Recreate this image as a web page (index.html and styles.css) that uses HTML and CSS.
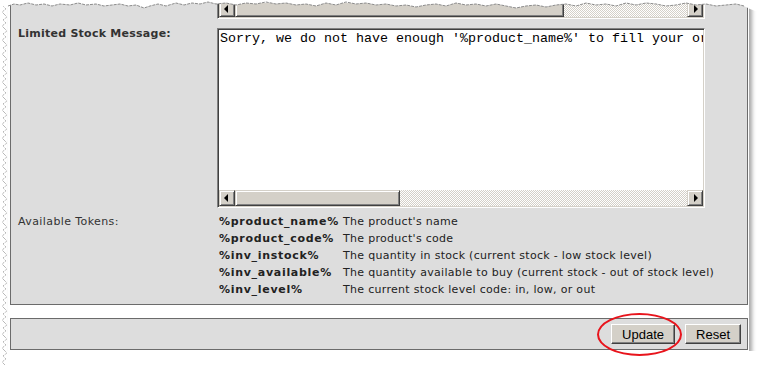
FILE: index.html
```html
<!DOCTYPE html>
<html lang="en">
<head>
    <meta charset="UTF-8">
    <title>Inventory Settings</title>
    <link rel="stylesheet" href="styles.css">
</head>
<body>
    <div class="frame">
        <div class="panel">
            <div class="label"></div>
            <div class="field">
                <div class="textbox tail">
                    <div class="hscroll">
                        <span class="sb-btn left"></span>
                        <span class="sb-thumb long"></span>
                        <span class="sb-track"></span>
                        <span class="sb-btn right"></span>
                    </div>
                </div>
            </div>

            <div class="label strong">Limited Stock Message:</div>
            <div class="field message">
                <div class="textbox">
                    <div class="text">Sorry, we do not have enough '%product_name%' to fill your order. We have %inv_available% available.</div>
                    <div class="hscroll">
                        <span class="sb-btn left"></span>
                        <span class="sb-thumb short"></span>
                        <span class="sb-track"></span>
                        <span class="sb-btn right"></span>
                    </div>
                </div>
            </div>

            <div class="label plain">Available Tokens:</div>
            <div class="field list">
                <div class="tokens">
                    <b>%product_name%</b><span>The product's name</span>
                    <b>%product_code%</b><span>The product's code</span>
                    <b>%inv_instock%</b><span>The quantity in stock (current stock - low stock level)</span>
                    <b>%inv_available%</b><span>The quantity available to buy (current stock - out of stock level)</span>
                    <b>%inv_level%</b><span>The current stock level code: in, low, or out</span>
                </div>
            </div>
        </div>

        <div class="actions">
            <button class="btn">Update</button>
            <button class="btn">Reset</button>
        </div>
    </div>

    <!-- screenshot decorations -->
    <span class="highlight"></span>
    <svg class="torn-top" width="758" height="12" viewBox="0 0 758 12">
        <polygon fill="#fff" points="0,0 0,6 8,6 14,4 20,5 28,3 36,5 44,4 52,6 60,4 70,5 78,3 86,5 96,4 104,6 112,5 120,4 128,6 136,5 144,8 150,6 158,4 166,6 176,3 184,5 192,3 200,4 208,2 216,4 226,3 236,5 246,3 256,4 266,2 276,4 286,3 296,5 306,4 316,6 326,3 336,5 346,2 356,4 366,3 376,5 386,4 396,6 406,5 416,7 426,5 436,4 446,6 456,3 466,5 476,4 486,6 496,4 506,6 516,8 526,6 536,5 546,7 556,5 566,4 576,6 586,3 596,5 606,4 616,6 626,3 636,5 646,3 656,4 666,6 676,5 686,3 696,5 706,4 716,6 726,5 736,4 744,6 750,9 758,12 758,0"/>
        <polyline fill="none" stroke="#8c8c8c" stroke-width="1" stroke-dasharray="3 1" points="8,6 14,4 20,5 28,3 36,5 44,4 52,6 60,4 70,5 78,3 86,5 96,4 104,6 112,5 120,4 128,6 136,5 144,8 150,6 158,4 166,6 176,3 184,5 192,3 200,4 208,2 216,4 226,3 236,5 246,3 256,4 266,2 276,4 286,3 296,5 306,4 316,6 326,3 336,5 346,2 356,4 366,3 376,5 386,4 396,6 406,5 416,7 426,5 436,4 446,6 456,3 466,5 476,4 486,6 496,4 506,6 516,8 526,6 536,5 546,7 556,5 566,4 576,6 586,3 596,5 606,4 616,6 626,3 636,5 646,3 656,4 666,6 676,5 686,3 696,5 706,4 716,6 726,5 736,4 744,6"/>
    </svg>
    <svg class="torn-left" width="9" height="365">
        <defs>
            <pattern id="zig" width="9" height="14" patternUnits="userSpaceOnUse">
                <path d="M4 0 L7 3 L3 6 L6 9 L2 12 L4 14" fill="none" stroke="#9a9a9a" stroke-width="1" stroke-dasharray="1 1"/>
            </pattern>
        </defs>
        <rect x="0" y="6" width="9" height="359" fill="url(#zig)"/>
    </svg>
</body>
</html>
```

FILE: styles.css
```css
body {
    margin: 0;
    background-color: #fff;
    font-family: "DejaVu Sans", Verdana, sans-serif;
    font-size: 11px;
    color: #333;
}

.frame {
    width: 741px;
    margin-left: 8px;
    padding: 0 1px 1px 2px;
    box-sizing: border-box;
    background-color: #fff;
    box-shadow: 3px 3px 4px rgba(0, 0, 0, 0.35);
}

.panel {
    display: grid;
    grid-template-columns: 206px 1fr;
    align-items: start;
    background-color: #dddddd;
    border: 1px solid #6b6b6b;
    border-top: none;
    padding-bottom: 6px;
}

.label {
    padding-left: 7px;
    line-height: 17px;
    letter-spacing: 0.4px;
}

.label.strong {
    font-weight: bold;
    margin-top: 8px;
    line-height: 14px;
    letter-spacing: 0.25px;
}

.label.plain {
    margin-top: 5px;
}

.field {
    min-width: 0;
}

.field.message {
    margin-top: 9px;
}

.field.list {
    margin-top: 5px;
}

/* classic sunken textarea */
.textbox {
    width: 488px;
    height: 180px;
    box-sizing: border-box;
    border: 1px solid;
    border-color: #808080 #fff #fff #808080;
    box-shadow: inset 1px 1px #404040, inset -1px -1px #d4d0c8;
    background-color: #fff;
    padding: 1px;
    display: flex;
    flex-direction: column;
}

.textbox.tail {
    height: 19px;
    border-top: none;
    padding-top: 1px;
    box-shadow: inset 1px 0 #404040, inset -1px -1px #d4d0c8;
}

.text {
    flex: 1;
    overflow: hidden;
    white-space: pre;
    font-family: "Liberation Mono", "Courier New", monospace;
    font-size: 13.333px;
    line-height: 16px;
    color: #000;
    padding: 1px 0 0 1px;
}

.hscroll {
    display: flex;
    height: 16px;
    flex: none;
}

.sb-btn,
.sb-thumb {
    box-sizing: border-box;
    background-color: #d4d0c8;
    border: 1px solid;
    border-color: #d4d0c8 #404040 #404040 #d4d0c8;
    box-shadow: inset 1px 1px #fff, inset -1px -1px #808080;
}

.sb-btn {
    width: 16px;
    display: flex;
    align-items: center;
    justify-content: center;
}

.sb-btn::before {
    content: "";
    border-top: 4px solid transparent;
    border-bottom: 4px solid transparent;
}

.sb-btn.left::before {
    border-right: 4px solid #000;
    margin-right: 2px;
}

.sb-btn.right::before {
    border-left: 4px solid #000;
    margin-left: 2px;
}

.sb-thumb.long {
    width: 329px;
}

.sb-thumb.short {
    width: 165px;
}

.sb-track {
    flex: 1;
    background: repeating-conic-gradient(#d4d0c8 0 25%, #fff 0 50%) 0 0 / 2px 2px;
}

.tokens {
    display: grid;
    grid-template-columns: 124px auto;
    padding-left: 2px;
    line-height: 17px;
    color: #222;
    letter-spacing: 0.3px;
}

.tokens b {
    letter-spacing: 0.7px;
}

.actions {
    margin-top: 13px;
    display: flex;
    justify-content: flex-end;
    gap: 10px;
    padding: 5px 6px;
    background-color: #dddddd;
    border: 1px solid #6b6b6b;
}

.btn {
    height: 20px;
    padding: 0 10px;
    font-family: "Liberation Sans", Arial, sans-serif;
    font-size: 13px;
    color: #000;
    background-color: #d4d0c8;
    border: 1px solid;
    border-color: #fff #404040 #404040 #fff;
    box-shadow: inset -1px -1px #808080;
}

.highlight {
    position: absolute;
    left: 597px;
    top: 313px;
    width: 85px;
    height: 43px;
    box-sizing: border-box;
    border: 2px solid #e8141c;
    border-radius: 50%;
}

.torn-top {
    position: absolute;
    left: 0;
    top: 0;
}

.torn-left {
    position: absolute;
    left: 0;
    top: 0;
}
```
